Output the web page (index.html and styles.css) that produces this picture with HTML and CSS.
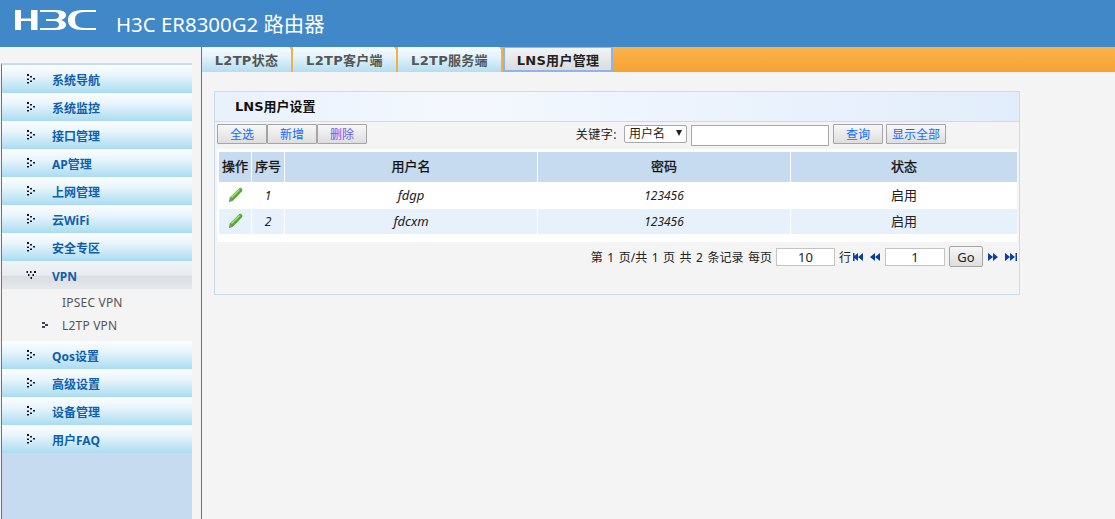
FILE: index.html
```html
<!DOCTYPE html>
<html lang="zh-CN">
<head>
    <meta charset="UTF-8">
    <title>H3C ER8300G2 路由器</title>
    <link rel="stylesheet" href="styles.css">
</head>
<body>
    <svg class="defs" width="0" height="0">
        <defs>
            <g id="dots">
                <rect x="0" y="0" width="2" height="2"/><rect x="3" y="2" width="2" height="1.500"/><rect x="6" y="4" width="2" height="1.500"/>
                <rect x="0" y="4.500" width="2" height="1.500"/><rect x="3" y="6.500" width="2" height="1.500"/><rect x="0" y="8" width="2" height="1.500"/>
            </g>
            <g id="pencil">
                <path d="M2.500 15.500l.8-4L12 2.800q1.500-1.200 2.500 0t0 2.400l-8.500 9z" fill="#4cb32b" stroke="#3f8f2c" stroke-width=".7"/>
                <path d="M4.500 11.500l8-8" stroke="#a8e873" stroke-width="1.200" fill="none"/>
                <path d="M2 16l1-4 3 2.500z" fill="#8d8f78"/>
            </g>
            <g id="prev"><path d="M5 0v8L0 4zM10 0v8L5 4z"/></g>
            <g id="next"><path d="M0 0v8l5-4zM5 0v8l5-4z"/></g>
        </defs>
    </svg>

    <header class="top-bar">
        <svg class="logo" width="81" height="20" viewBox="0 0 81 20">
            <path d="M0 0h6v8.500h10V0h6.500v20H16v-9H6v9H0z" fill="#fff"/>
            <path d="M25 0h15q11 0 11 5 0 3.500-5 5 5 1.500 5 5 0 5-11 5H25v-2h14q5 0 5-3.500T39 11h-8V9h8q5 0 5-3.500T39 2H25z" fill="#fff"/>
            <path d="M81 2H69q-9 0-9 8t9 8h12v2H68Q53 20 53 10T68 0h13z" fill="#fff"/>
        </svg>
        <span class="product">H3C ER8300G2 路由器</span>
    </header>

    <div class="main">
        <nav class="sidebar">
            <ul class="menu">
                <li class="menu-item"><svg class="bullet"><use href="#dots"/></svg>系统导航</li>
                <li class="menu-item"><svg class="bullet"><use href="#dots"/></svg>系统监控</li>
                <li class="menu-item"><svg class="bullet"><use href="#dots"/></svg>接口管理</li>
                <li class="menu-item"><svg class="bullet"><use href="#dots"/></svg>AP管理</li>
                <li class="menu-item"><svg class="bullet"><use href="#dots"/></svg>上网管理</li>
                <li class="menu-item"><svg class="bullet"><use href="#dots"/></svg>云WiFi</li>
                <li class="menu-item"><svg class="bullet"><use href="#dots"/></svg>安全专区</li>
                <li class="menu-item open"><svg class="bullet down"><use href="#dots"/></svg>VPN</li>
                <li class="submenu">
                    <a class="sub-link">IPSEC VPN</a>
                    <a class="sub-link current">L2TP VPN</a>
                </li>
                <li class="menu-item"><svg class="bullet"><use href="#dots"/></svg>Qos设置</li>
                <li class="menu-item"><svg class="bullet"><use href="#dots"/></svg>高级设置</li>
                <li class="menu-item"><svg class="bullet"><use href="#dots"/></svg>设备管理</li>
                <li class="menu-item"><svg class="bullet"><use href="#dots"/></svg>用户FAQ</li>
            </ul>
        </nav>

        <section class="content">
            <div class="tabs">
                <a class="tab first">L2TP状态</a>
                <a class="tab">L2TP客户端</a>
                <a class="tab">L2TP服务端</a>
                <a class="tab active">LNS用户管理</a>
            </div>

            <div class="panel">
                <h2 class="panel-title">LNS用户设置</h2>
                <div class="toolbar">
                    <div class="btn-group">
                        <button class="btn">全选</button>
                        <button class="btn">新增</button>
                        <button class="btn purple">删除</button>
                    </div>
                    <div class="search">
                        <label class="search-label">关键字:</label>
                        <span class="select">用户名<i class="caret"></i></span>
                        <input class="search-input" type="text">
                        <button class="btn">查询</button>
                        <button class="btn wide">显示全部</button>
                    </div>
                </div>

                <div class="table-wrap">
                    <table class="grid">
                        <thead>
                            <tr>
                                <th class="col-op">操作</th>
                                <th class="col-no">序号</th>
                                <th class="col-name">用户名</th>
                                <th class="col-name">密码</th>
                                <th>状态</th>
                            </tr>
                        </thead>
                        <tbody>
                            <tr class="row-a">
                                <td><svg width="17" height="17"><use href="#pencil"/></svg></td>
                                <td class="em">1</td>
                                <td class="em name">fdgp</td>
                                <td class="em">123456</td>
                                <td>启用</td>
                            </tr>
                            <tr class="row-b">
                                <td><svg width="17" height="17"><use href="#pencil"/></svg></td>
                                <td class="em">2</td>
                                <td class="em name">fdcxm</td>
                                <td class="em">123456</td>
                                <td>启用</td>
                            </tr>
                        </tbody>
                    </table>
                </div>

                <div class="pager">
                    <span class="page-info">第 1 页/共 1 页 共 2 条记录 每页</span>
                    <input class="page-input size" type="text" value="10">
                    <span class="unit">行</span>
                    <svg class="nav-icon first" width="10" height="8"><use href="#prev"/><rect width="1.500" height="8"/></svg>
                    <svg class="nav-icon" width="10" height="8"><use href="#prev"/></svg>
                    <input class="page-input current" type="text" value="1">
                    <button class="go">Go</button>
                    <svg class="nav-icon first" width="10" height="8"><use href="#next"/></svg>
                    <svg class="nav-icon" width="12" height="8"><use href="#next"/><rect x="10.500" width="1.500" height="8"/></svg>
                </div>
            </div>
        </section>
    </div>
</body>
</html>
```
FILE: styles.css
```css
* {
    box-sizing: border-box;
}

html, body {
    height: 100%;
}

body {
    margin: 0;
    background: #f4f4f4;
    font-family: "Noto Sans", "Noto Sans CJK SC", sans-serif;
    font-size: 12px;
    color: #222;
    overflow: hidden;
    display: flex;
    flex-direction: column;
}

.defs {
    position: absolute;
}

.top-bar {
    height: 47px;
    flex: none;
    background: #4088c8;
    display: flex;
    align-items: flex-start;
    padding: 10px 0 0 15px;
    color: #fff;
}

.logo {
    flex: none;
}

.product {
    margin-left: 20px;
    margin-top: 1px;
    font-size: 20.4px;
    line-height: 27px;
}

.main {
    flex: 1;
    display: flex;
    min-height: 0;
}

.sidebar {
    width: 202px;
    flex: none;
    padding: 16px 9px 0 1px;
    border-right: 1px solid #3f7fc0;
    background: #f4f4f4;
}

.menu {
    list-style: none;
    margin: 0;
    padding: 0;
    height: 100%;
    border-left: 1px solid #3f7fc0;
    border-top: 2px solid #c6daf0;
    background: #c6daf0;
}

.menu-item {
    height: 28px;
    display: flex;
    align-items: center;
    padding: 2px 0 0 25px;
    background: linear-gradient(#fbfdff, #eaf6fc 35%, #aadcf2);
    color: #0f5fae;
    font-weight: bold;
    font-size: 12px;
}

.menu-item.open {
    background: linear-gradient(#f0f3f6, #e8ecf0 50%, #d9dee3 55%, #e6e9ec);
}

.bullet {
    width: 8px;
    height: 10px;
    margin: -2px 17px 0 0;
    fill: #112;
}

.bullet.down {
    transform: rotate(90deg);
}

.submenu {
    height: 52px;
    background: #f4f4f4;
    display: flex;
    flex-direction: column;
    padding: 2px 0 0 60px;
}

.sub-link {
    height: 23px;
    line-height: 23px;
    color: #555;
    position: relative;
    letter-spacing: .2px;
}

.sub-link.current::before {
    content: "";
    position: absolute;
    left: -20px;
    top: 8px;
    width: 3px;
    height: 2px;
    background: #445;
    box-shadow: 0 4px 0 #445, 3px 2px 0 #445;
}

.content {
    flex: 1;
    min-width: 0;
}

.tabs {
    height: 25px;
    display: flex;
    background: linear-gradient(#f9b44a, #f6a232);
}

.tab {
    width: 105px;
    height: 25px;
    display: flex;
    align-items: center;
    justify-content: center;
    position: relative;
    background: linear-gradient(#f6fbfe, #e6f4fb 35%, #b3def2);
    border-right: 2px solid #f3b04a;
    font-family: "DejaVu Sans", "Noto Sans CJK SC", sans-serif;
    font-weight: bold;
    font-size: 13px;
    letter-spacing: .3px;
    color: #555;
}

.tab.first {
    width: 91px;
}

.tab::after {
    content: "";
    position: absolute;
    right: -4px;
    top: 0;
    border-top: 4px solid #f3b04a;
    border-left: 3px solid transparent;
    border-right: 3px solid transparent;
}

.tab.active {
    width: 110px;
    background: linear-gradient(#f2f3f5, #e6e8ea 50%, #d9dde0);
    border: 1px solid #8fb4e6;
    border-width: 1px 2px 2px;
    color: #222;
}

.tab.active::after {
    display: none;
}

.panel {
    margin: 19px 0 0 12px;
    width: 806px;
    height: 204px;
    border: 1px solid #c8dcf0;
    background: #f4f4f4;
}

.panel-title {
    height: 30px;
    margin: 0;
    padding-left: 20px;
    line-height: 30px;
    font-family: "DejaVu Sans", "Noto Sans CJK SC", sans-serif;
    font-size: 13px;
    color: #111;
    background: linear-gradient(90deg, #e8f1fc, #f4f8fe 30%, #e2edfb);
    border-bottom: 1px solid #c8dcf0;
}

.toolbar {
    display: flex;
    justify-content: space-between;
    align-items: flex-start;
    padding: 2px 73px 0 2px;
    height: 27px;
}

.btn-group {
    display: flex;
}

.search {
    display: flex;
    align-items: flex-start;
}

.search-label {
    line-height: 21px;
    margin-right: 7px;
    letter-spacing: .5px;
}

.btn {
    width: 50px;
    height: 20px;
    padding: 0;
    border: 1px solid #a5a5a5;
    border-radius: 1px;
    background: linear-gradient(#f7f7f7, #dedede);
    color: #0f6bff;
    font: inherit;
    font-size: 12px;
}

.btn.purple {
    color: #6a5cf0;
}

.btn.wide {
    width: 60px;
    margin-left: 3px;
}

.select {
    width: 63px;
    height: 18px;
    margin: 1px 4px 0 0;
    padding-left: 4px;
    line-height: 16px;
    border: 1px solid #a8a8a8;
    border-radius: 2px;
    background: #fff;
    position: relative;
}

.caret {
    position: absolute;
    right: 4px;
    top: 4px;
    border-top: 6px solid #222;
    border-left: 3px solid transparent;
    border-right: 3px solid transparent;
}

.search-input {
    width: 138px;
    height: 21px;
    margin: 1px 4px 0 0;
    border: 1px solid #a8a8a8;
    background: #fff;
}

.table-wrap {
    width: 800px;
    margin-left: 2px;
    padding: 3px 0 8px 2px;
    background: #fff;
}

.grid {
    width: 798px;
    border-collapse: separate;
    border-spacing: 0;
    table-layout: fixed;
}

.grid th {
    height: 30px;
    padding: 0 0 3px;
    background: #c6dbf0;
    font-weight: normal;
    color: #111;
    -webkit-text-stroke: .3px #111;
    font-size: 13px;
    border-right: 1px solid #fff;
}

.grid th:last-child,
.grid td:last-child {
    border-right: none;
}

.grid td {
    text-align: center;
    padding: 0 0 2px;
    color: #222;
    font-size: 13px;
    border-right: 1px solid #fff;
}

.grid svg {
    display: block;
    margin: 0 auto;
}

.col-op {
    width: 33px;
}

.col-no {
    width: 33px;
}

.col-name {
    width: 253px;
}

.row-a td {
    height: 27px;
    background: #fff;
}

.row-b td {
    height: 25px;
    background: #e6f1fb;
}

.grid td.em {
    font-style: italic;
    font-size: 12px;
    padding-bottom: 0;
}

.grid td.name {
    font-size: 13px;
    padding-bottom: 2px;
}

.pager {
    display: flex;
    justify-content: flex-end;
    align-items: center;
    height: 28px;
    width: 802px;
    padding-top: 1px;
}

.page-info {
    word-spacing: 1.400px;
}

.page-input {
    width: 60px;
    height: 18px;
    margin: 0 4px;
    border: 1px solid #c4c4c4;
    background: #fff;
    text-align: center;
    font: inherit;
    font-size: 13px;
    color: #222;
    padding: 0;
}

.page-input.size {
    width: 59px;
    margin-left: 4px;
}

.page-input.current {
    margin-left: 5px;
}

.unit {
    margin-right: 2px;
}

.nav-icon {
    fill: #0a3f9c;
}

.nav-icon.first {
    margin-right: 7px;
}

.go {
    width: 34px;
    height: 21px;
    padding: 0;
    margin: 0 5px 0 0;
    border: 1px solid #a5a5a5;
    border-radius: 2px;
    background: linear-gradient(#f7f7f7, #dedede);
    font: inherit;
    font-size: 13px;
    color: #222;
}
```
